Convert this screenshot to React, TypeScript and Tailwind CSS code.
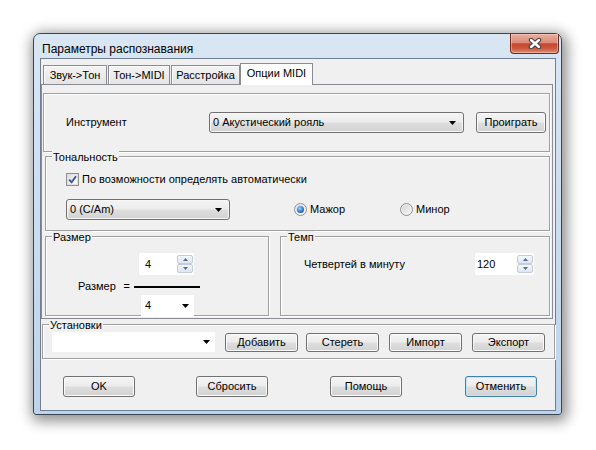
import React from "react";

const btnBg =
  "bg-[linear-gradient(to_bottom,#f4f4f4_0%,#ececec_48%,#dedede_52%,#d2d2d2_100%)]";

function Arrow() {
  return (
    <svg width="7" height="4" viewBox="0 0 7 4">
      <polygon points="0,0 7,0 3.5,4" fill="#000" />
    </svg>
  );
}

function Combo({ text, className = "" }: { text: string; className?: string }) {
  return (
    <div
      className={`flex items-center justify-between rounded-[3px] border border-[#707070] shadow-[inset_0_0_0_1px_#f8f8f8] ${btnBg} pl-[3px] pr-[7px] ${className}`}
    >
      <span>{text}</span>
      <Arrow />
    </div>
  );
}

function FlatCombo({ text, className = "" }: { text: string; className?: string }) {
  return (
    <div className={`flex items-center justify-between bg-white pl-[4px] pr-[5px] ${className}`}>
      <span>{text}</span>
      <Arrow />
    </div>
  );
}

function Btn({
  children,
  className = "",
  primary = false,
}: {
  children: React.ReactNode;
  className?: string;
  primary?: boolean;
}) {
  return (
    <div
      className={`flex items-center justify-center rounded-[3px] border ${
        primary
          ? "border-[#3c7fb1] shadow-[inset_0_0_0_1px_#bfe9fb]"
          : "border-[#707070] shadow-[inset_0_0_0_1px_#fbfbfb]"
      } ${btnBg} ${className}`}
    >
      {children}
    </div>
  );
}

function Group({
  title,
  className = "",
  children,
}: {
  title?: string;
  className?: string;
  children?: React.ReactNode;
}) {
  return (
    <div
      className={`relative border border-[#a0a0a0] shadow-[inset_1px_1px_0_#ffffff,1px_1px_0_#ffffff] ${className}`}
    >
      {title && (
        <span className="absolute left-[6px] top-[-6px] bg-[#f0f0f0] px-px leading-[13px]">
          {title}
        </span>
      )}
      {children}
    </div>
  );
}

function CheckBox() {
  return (
    <div className="flex h-[13px] w-[13px] items-center justify-center border border-[#8e8f8f] bg-white">
      <div className="flex h-[11px] w-[11px] items-center justify-center border border-[#e0e0e0] bg-[linear-gradient(135deg,#dedede,#ffffff)]">
        <svg width="9" height="9" viewBox="0 0 9 9">
          <path d="M1.2 4.6 L3.6 7.2 L8 1.2" stroke="#40559a" strokeWidth="1.9" fill="none" />
        </svg>
      </div>
    </div>
  );
}

function Radio({ checked = false }: { checked?: boolean }) {
  return (
    <div className="flex h-[13px] w-[13px] items-center justify-center rounded-full border border-[#8e8f8f] bg-[linear-gradient(135deg,#d2d2d2,#f9f9f9)] shadow-[inset_0_0_0_1px_#f4f4f4]">
      {checked && (
        <div className="h-[7px] w-[7px] rounded-full bg-[radial-gradient(circle_at_40%_35%,#9bd8ff_0%,#2a79cc_55%,#0f4486_100%)]" />
      )}
    </div>
  );
}

function SpinBtn({ up = false }: { up?: boolean }) {
  return (
    <div className="flex h-[9px] w-[16px] items-center justify-center rounded-[2px] border border-[#c3ccd8] bg-[linear-gradient(to_bottom,#f5f8fb,#dfe6ee)]">
      <svg width="5" height="3" viewBox="0 0 5 3">
        <polygon points={up ? "0,3 5,3 2.5,0" : "0,0 5,0 2.5,3"} fill="#4d6aa3" />
      </svg>
    </div>
  );
}

function Spinner({ value, className = "" }: { value: string; className?: string }) {
  return (
    <div className={`flex bg-white ${className}`}>
      <div className="flex flex-1 items-center">{value}</div>
      <div className="flex flex-col pr-px pt-[2px]">
        <SpinBtn up />
        <SpinBtn />
      </div>
    </div>
  );
}

function Tab({ label, className = "" }: { label: string; className?: string }) {
  return (
    <div
      className={`flex h-[19px] items-center justify-center border border-b-0 border-[#898c95] bg-[linear-gradient(to_bottom,#f4f4f4,#e4e4e4)] shadow-[inset_1px_1px_0_#fcfcfc] ${className}`}
    >
      {label}
    </div>
  );
}

function TitleBar() {
  return (
    <div className="flex h-[24px] shrink-0 items-start justify-between">
      <div className="pl-[8px] pt-[8px] text-[12px] leading-[15px]">Параметры распознавания</div>
      <div className="mr-[2px] flex h-[20px] w-[49px] items-center justify-center rounded-b-[4px] border border-t-0 border-[#6a2b20] bg-[linear-gradient(to_bottom,#eab0a2_0%,#dc8a77_45%,#c7452d_52%,#cc583e_75%,#e08c70_100%)] shadow-[inset_0_0_0_1px_rgba(255,220,210,0.45)]">
        <svg width="14" height="11" viewBox="0 0 14 11">
          <path d="M3 2 L11 9 M11 2 L3 9" stroke="#3f3f3f" strokeWidth="4.4" strokeLinecap="round" />
          <path d="M3 2 L11 9 M11 2 L3 9" stroke="#ffffff" strokeWidth="2.4" strokeLinecap="round" />
        </svg>
      </div>
    </div>
  );
}

export default function App() {
  return (
    <div className="h-[450px] w-[596px] overflow-hidden bg-white pl-[33px] pt-[33px] font-['Liberation_Sans',Arial,sans-serif] text-[11px] leading-[13px] text-black">
      <div className="flex h-[382px] w-[529px] flex-col rounded-b-[3px] rounded-t-[7px] border border-[#3b4452] bg-[linear-gradient(to_bottom,#d9e6f4,#bdd3eb)] shadow-[2px_3px_14px_3px_rgba(0,0,0,0.45)]">
        <TitleBar />
        <div className="pl-[6px] pr-[5px]">
          <div className="h-[353px] w-[516px] border border-[#6f7f91] bg-[#f0f0f0]">
            {/* tabs */}
            <div className="flex h-[25px] items-end pl-[2px]">
              <Tab label="Звук->Тон" className="w-[64px]" />
              <Tab label="Тон->MIDI" className="ml-px w-[62px]" />
              <Tab label="Расстройка" className="ml-px w-[69px]" />
              <div className="relative z-10 -mb-px flex h-[22px] w-[73px] items-center justify-center border border-b-0 border-[#898c95] bg-white pb-[2px]">
                Опции MIDI
              </div>
            </div>

            <div className="h-[235px] w-[512px] border border-[#898c95]">
              <Group className="ml-px mt-[8px] h-[59px] w-[507px]">
                <div className="flex items-center pl-[22px] pt-[18px]">
                  <div className="w-[143px]">Инструмент</div>
                  <Combo text="0 Акустический рояль" className="h-[21px] w-[255px]" />
                  <Btn className="ml-[12px] h-[21px] w-[70px]">Проиграть</Btn>
                </div>
              </Group>

              <Group title="Тональность" className="ml-[3px] mt-[4px] h-[75px] w-[505px]">
                <div className="flex h-[13px] items-center pl-[20px] mt-[16px]">
                  <CheckBox />
                  <span className="ml-[3px]">По возможности определять автоматически</span>
                </div>
                <div className="mt-[13px] flex items-center pl-[20px]">
                  <Combo text="0 (C/Am)" className="h-[21px] w-[164px]" />
                  <div className="ml-[64px] flex w-[106px] items-center">
                    <Radio checked />
                    <span className="ml-[3px]">Мажор</span>
                  </div>
                  <div className="flex items-center">
                    <Radio />
                    <span className="ml-[3px]">Минор</span>
                  </div>
                </div>
              </Group>

              <div className="mt-[5px] flex">
                <Group title="Размер" className="ml-[3px] h-[80px] w-[224px]">
                  <Spinner value="4" className="ml-[93px] mt-[16px] h-[22px] w-[55px] pl-[6px]" />
                  <div className="mt-[5px] flex h-[13px] items-center pl-[32px]">
                    <div className="flex w-[52px] justify-between">
                      <span>Размер</span>
                      <span>=</span>
                    </div>
                    <div className="ml-[4px] h-[2px] w-[66px] bg-black" />
                  </div>
                  <FlatCombo text="4" className="ml-[95px] mt-[2px] h-[21px] w-[53px]" />
                </Group>

                <Group title="Темп" className="ml-[11px] h-[80px] w-[270px]">
                  <div className="mt-[16px] flex h-[22px] items-center pl-[23px]">
                    <div className="w-[171px]">Четвертей в минуту</div>
                    <Spinner value="120" className="h-[22px] w-[59px] pl-[2px]" />
                  </div>
                </Group>
              </div>
            </div>

            <Group title="Установки" className="ml-px mt-[5px] h-[35px] w-[513px]">
              <div className="flex h-[20px] items-center pl-[9px] mt-[7px]">
                <FlatCombo text="" className="h-[20px] w-[163px]" />
                <Btn className="ml-[10px] h-[19px] w-[73px]">Добавить</Btn>
                <Btn className="ml-[8px] h-[19px] w-[73px]">Стереть</Btn>
                <Btn className="ml-[10px] h-[19px] w-[73px]">Импорт</Btn>
                <Btn className="ml-[10px] h-[19px] w-[73px]">Экспорт</Btn>
              </div>
            </Group>

            <div className="mt-[17px] flex">
              <Btn className="ml-[22px] h-[21px] w-[72px]">OK</Btn>
              <Btn className="ml-[61px] h-[21px] w-[72px]">Сбросить</Btn>
              <Btn className="ml-[62px] h-[21px] w-[72px]">Помощь</Btn>
              <Btn primary className="ml-[63px] h-[21px] w-[72px]">
                Отменить
              </Btn>
            </div>
          </div>
        </div>
      </div>
    </div>
  );
}
